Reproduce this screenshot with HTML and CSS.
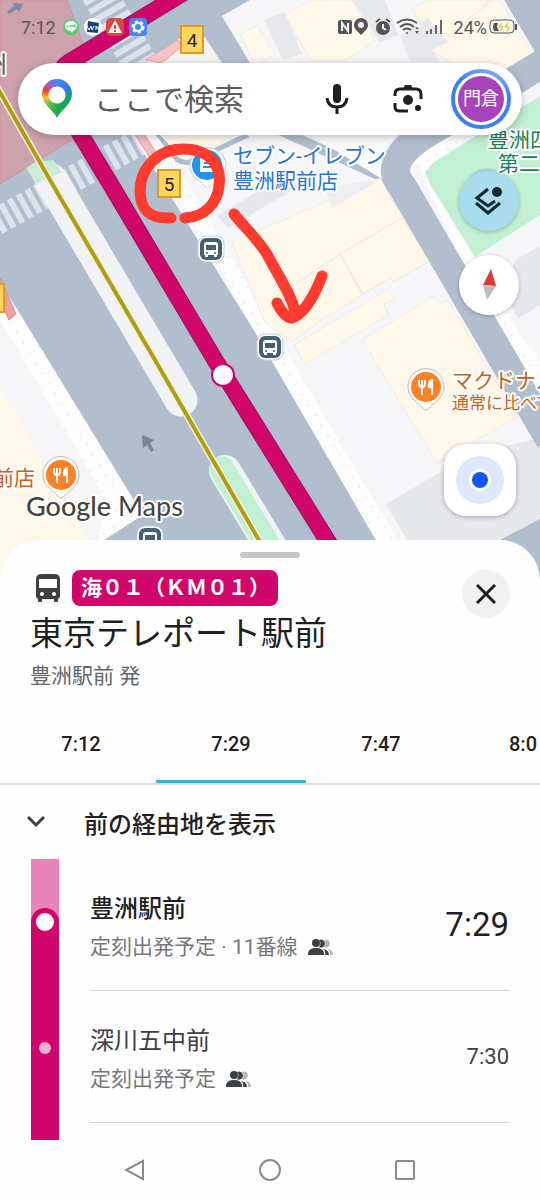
FILE: index.html
```html
<!DOCTYPE html>
<html lang="ja">
<head>
    <meta charset="UTF-8">
    <meta name="viewport" content="width=device-width, initial-scale=1">
    <title>Google Maps</title>
    <link rel="stylesheet" href="styles.css">
</head>
<body>
    <main class="map">
        <svg class="map-canvas" viewBox="0 0 540 580" preserveAspectRatio="xMidYMin slice">
            <defs>
                <pattern id="dots" width="11" height="12" patternUnits="userSpaceOnUse" patternTransform="rotate(-32)">
                    <rect width="11" height="12" fill="#fdfdfe"/>
                    <circle cx="3" cy="3" r="0.8" fill="#dcdfe3"/>
                </pattern>
                <g id="bus-stop">
                    <rect x="-13" y="-13" width="26" height="26" rx="8" fill="#fff" stroke="#c5ccd3" stroke-width="1"/>
                    <rect x="-11" y="-11" width="22" height="22" rx="6" fill="#455f73"/>
                    <path d="M-7,-4 Q-7,-7 -4,-7 H4 Q7,-7 7,-4 V6 H6 V8 H3 V6 H-3 V8 H-6 V6 H-7 Z" fill="#fff"/>
                    <rect x="-5" y="-4" width="10" height="5" fill="#455f73"/>
                    <circle cx="-4" cy="4" r="1" fill="#455f73"/>
                    <circle cx="4" cy="4" r="1" fill="#455f73"/>
                </g>
                <g id="food">
                    <path d="M0,23 C-3,22 -9,15 -13,12 A18,18 0 1 1 13,12 C9,15 3,22 0,23 Z" fill="#fff" stroke="#bdb8b2" stroke-width="1"/>
                    <circle r="15" fill="#ff8126"/>
                    <path d="M-7,-7 V-3 Q-7,0 -4,0 V8 M-4,-7 V0 M-1,-7 V-3 Q-1,0 -4,0" fill="none" stroke="#fff" stroke-width="2"/>
                    <path d="M7,-8 V8 H5 V1 H2 V-3 Q3,-8 7,-8Z" fill="#fff"/>
                </g>
            </defs>

            <rect width="540" height="580" fill="#b0bece"/>

            <!-- station block -->
            <path d="M0,0 H67 L83,44 L86,63 L73,139 L0,184 Z" fill="#cea2ad" stroke="#d58d9c"/>
            <path d="M7,12 L14,6 L13,3 L23,4 L19,12 L17,9 L9,14 Z" fill="#7d8b9c"/>

            <!-- crosswalks -->
            <path d="M98,-8 L144,70" stroke="#dbe3ec" stroke-width="35" stroke-dasharray="6 4"/>
            <path d="M-4,222 L150,136" stroke="#dbe3ec" stroke-width="27" stroke-dasharray="6 4"/>

            <!-- block on the left -->
            <path d="M0,283 L17,309 L143,515 L104,540 L85,580 H0 Z" fill="url(#dots)"/>
            <path d="M0,320 L106,500 L90,580 H0 Z" fill="#f6f6f8"/>
            <path d="M0,386 L25,430 L88,540 V580 H0 Z" fill="#fdf8ea"/>
            <path d="M0,278 L16,314 L9,320 L0,300 Z" fill="#eda2a2" stroke="#e28789"/>
            <path d="M110,545 L146,522" stroke="#b0bece" stroke-width="7"/>

            <!-- blocks on the right -->
            <path d="M222,16 L250,0 H504 L540,60 V580 H399 L376,540 L258,337 L124,121 L150,58 L193,30 L200,28 L222,63 L250,63 Z" fill="#f6f6f8"/>
            <path d="M145,135 L160,135 L208,217 L404,552 L390,565 L376,540 L258,337 Z" fill="url(#dots)"/>
            <path d="M196,34 L222,63 H248 L222,18 L205,-4 L178,14 Z" fill="#b0bece"/>
            <path d="M205,-4 L222,16 L250,0 Z" fill="#b0bece"/>
            <path d="M222,16 L250,0 H504 L536,56 L470,92 L200,95 L255,70 Z" fill="#f6f6f8"/>
            <path d="M240,35 L257,25 L275,55 L255,65 Z M285,15 L312,0 H352 L375,40 L347,60 H310 Z M430,50 L493,0 L500,1 L534,56 L470,90 L450,62 Z M412,8 L430,0 H490 L447,40 L432,45 Z" fill="#fdf8ea" stroke="#f1ecdf"/>
            <path d="M264,20 L284,12 L302,54 L283,60 Z M352,0 H385 L398,35 L380,42 Z M400,35 L428,18 L448,42 L432,50 L440,62 L410,62 Z" fill="#e8e9ed"/>
            <path d="M200,30 L222,63 H150 Z" fill="#f6f4ef"/>
            <path d="M145,60 L178,40 L182,46 L162,63 Z" fill="#f4c4c6" stroke="#e9a5a7"/>
            <path d="M135,135 L145,135 L157,154 L150,158 Z" fill="#f5bcbd" stroke="#e9a5a7"/>
            <path d="M148,120 L170,150 Q178,165 190,162 L248,135" stroke="#b0bece" stroke-width="5" fill="none"/>
            <path d="M160,135 H235 L190,158 Q180,160 174,150 Z" fill="#fdf8ea"/>
            <path d="M275,128 L400,185" stroke="#b0bece" stroke-width="10" fill="none"/>
            <path d="M310,135 H410 L390,160 L392,185 Z" fill="#fafafb"/>
            <path d="M217,216 L270,184 L300,186 L228,228 Z" fill="#e6e8ec"/>
            <path d="M232,242 L380,178 L402,218 L340,254 L362,295 L318,322 L292,341 L265,323 Z" fill="#fdf8ea" stroke="#f1ecdf"/>
            <path d="M340,254 L402,218 L430,261 L394,281 L390,278 L363,294 Z M268,302 L340,254" fill="#fdf8ea" stroke="#efe9dc"/>
            <path d="M325,187 L380,180 L332,208 Z" fill="#eeeef1"/>
            <path d="M294,345 L388,289 L395,299 L384,304 L388,315 L305,364 Z" fill="#fdf8ea" stroke="#f1ecdf"/>
            <path d="M362,340 L433,296 L441,303 L448,300 L516,417 L437,463 Z" fill="#fdf8ea" stroke="#f1ecdf"/>
            <path d="M386,504 L488,444 L494,448 L533,440 L540,447 V580 H430 Z" fill="#e7e8ec"/>
            <path d="M490,580 L500,540 L540,519 V580 Z" fill="#b0bece"/>

            <!-- park and side road -->
            <path d="M405,135 H540 V240 L475,257 L530,345 L540,360 V440 Z" fill="url(#dots)"/>
            <path d="M425,172 L434,162 L540,96 V215 L475,257 L430,184 Z" fill="#c2f0d2"/>
            <path d="M475,257 L540,217 V345 L530,350 Z" fill="#f6f6f8"/>
            <path d="M518,258 L540,246 V305 L518,319 L500,285 Z" fill="#e7e8ec"/>
            <circle cx="487" cy="188" r="20" fill="#aadcea"/>
            <path d="M525,0 L560,60 M552,58 L432,130 Q380,160 402,186 L550,440" fill="none" stroke="#b0bece" stroke-width="29"/>

            <!-- median strips -->
            <path d="M51,180 L181,400" stroke="#f1f3f5" stroke-width="33" stroke-linecap="round"/>
            <path d="M26,168 L35,162 L53,160 L62,172 L36,184 Z" fill="#c9ecd7"/>
            <path d="M225,471 L285,570" stroke="#f1f3f5" stroke-width="32" stroke-linecap="round"/>
            <path d="M222,469 L282,568" stroke="#c2f0d2" stroke-width="25" stroke-linecap="round"/>

            <!-- rail and bus route -->
            <path d="M-3,87 L50,180 L155,360 L278,573" fill="none" stroke="#f3f1dc" stroke-width="7"/>
            <path d="M-3,87 L50,180 L155,360 L278,573" fill="none" stroke="#b09d14" stroke-width="4"/>
            <path d="M188,-10 L68,63 Q52,74 62,104 L108,180 L215,360 L350,577" fill="none" stroke="#a30a5c" stroke-width="17"/>
            <path d="M188,-10 L68,63 Q52,74 62,104 L108,180 L215,360 L350,577" fill="none" stroke="#d1066c" stroke-width="15"/>
            <circle cx="223" cy="375" r="11" fill="#fff" stroke="#d1066c" stroke-width="2"/>
            <path d="M142,435 L154,440 L150,443 L154,450 L151,452 L147,445 L143,448 Z" fill="#76869a"/>

            <!-- exits -->
            <g class="exit">
                <rect x="181" y="26" width="22" height="27"/>
                <text x="192" y="47">4</text>
                <rect x="-18" y="284" width="22" height="28"/>
            </g>

            <!-- places -->
            <path d="M208,188 C205,187 199,180 194,177 A18,18 0 1 1 222,177 C217,180 211,187 208,188 Z" fill="#fff" stroke="#c9ced4"/>
            <circle cx="207" cy="165" r="15" fill="#1a95f2"/>
            <path d="M200,158 H212 L214,162 V172 H200 Z" fill="#fff"/>
            <path d="M203,167 H211 M204,163 H210" stroke="#1a95f2" stroke-width="2"/>
            <g class="exit">
                <rect x="158" y="170" width="22" height="27"/>
                <text x="169" y="191">5</text>
            </g>
            <use href="#bus-stop" x="211" y="249"/>
            <use href="#bus-stop" x="270" y="347"/>
            <use href="#bus-stop" x="150" y="539"/>
            <use href="#food" x="61" y="475"/>
            <use href="#food" x="426" y="387"/>
            <g class="place">
                <text class="shop" x="233" y="163">セブン-イレブン</text>
                <text class="shop" x="233" y="188">豊洲駅前店</text>
                <text class="park" x="488" y="147">豊洲四</text>
                <text class="park" x="498" y="171">第二</text>
                <text class="restaurant" x="452" y="388">マクドナル</text>
                <text class="restaurant small" x="452" y="409">通常に比べて</text>
                <text class="restaurant" x="-7" y="485">前店</text>
                <text class="station" x="-17" y="73">州</text>
                <text class="brand" x="26" y="516"><tspan class="brand-name">Google</tspan> Maps</text>
            </g>

            <!-- hand drawn marks -->
            <path class="ink" d="M171,218 C150,219 141,211 140,192 C140,166 160,149 183,149 C210,149 222,166 219,186 C217,204 204,217 185,218"/>
            <path class="ink" d="M234,214 C245,228 262,244 268,256 C280,279 294,299 295,314 M277,303 C281,311 286,318 292,318 C301,315 312,302 322,276"/>
        </svg>

        <div class="overlay">
            <header class="status-bar">
                <span>7:12</span>
                <svg width="84" height="18" viewBox="0 0 84 18">
                    <circle cx="8" cy="9" r="8" fill="#56cf6c"/>
                    <ellipse cx="8" cy="8" rx="6" ry="5" fill="#fff"/>
                    <path d="M6,11 L9,15 L12,11 Z" fill="#fff"/>
                    <path d="M4,7 V9 H6 M7,7 V9 M8,9 V7 L10,9 V7 M13,7 H11 V9 H13" fill="none" stroke="#56cf6c" stroke-width="1"/>
                    <circle cx="30" cy="9" r="9" fill="#fff"/>
                    <path d="M25,3 L36,5 L35,15 L24,14 Z" fill="#164481"/>
                    <path d="M24,8 L26,12 L28,8 L29,12 L31,8 M33,12 V8 L36,12 V8" fill="none" stroke="#fff" stroke-width="1"/>
                    <rect x="43" width="18" height="18" rx="5" fill="#dd4540"/>
                    <path d="M52,2 L59,15 H45 Z" fill="#fff"/>
                    <path d="M52,7 V11 M52,12 V14" stroke="#dd4540" stroke-width="2"/>
                    <rect x="66" width="18" height="18" rx="4" fill="#4486f4"/>
                    <circle cx="75" cy="9" r="5" fill="none" stroke="#fff" stroke-width="3" stroke-dasharray="3 2"/>
                    <circle cx="75" cy="9" r="4" fill="none" stroke="#fff" stroke-width="2"/>
                </svg>
                <svg class="status-right" width="108" height="20" viewBox="0 0 108 20" fill="#555">
                    <rect x="0" y="3" width="14" height="14" rx="2"/>
                    <path d="M4,14 V6 L10,14 V6" fill="none" stroke="#f6f6f8" stroke-width="2"/>
                    <path d="M23,18 C18,13 16,11 16,8 A7,7 0 0 1 30,8 C30,11 28,13 23,18 Z"/>
                    <circle cx="23" cy="8" r="3" fill="#f6f6f8"/>
                    <circle cx="45" cy="11" r="7"/>
                    <path d="M38,5 L42,2 M52,5 L48,2" stroke="#555" stroke-width="2"/>
                    <path d="M45,7 V11 L48,13" fill="none" stroke="#f6f6f8" stroke-width="2"/>
                    <path d="M59,6 Q69,-1 79,6 M62,10 Q69,4 76,10 M65,13 Q69,10 73,13" fill="none" stroke="#555" stroke-width="2"/>
                    <circle cx="69" cy="16" r="1"/>
                    <path d="M77,12 L79,10 L81,12 Z M77,14 L79,17 L81,14 Z"/>
                    <path d="M89,17 V14 M93,17 V12 M98,17 V8 M103,17 V3" stroke="#666" stroke-width="2"/>
                </svg>
                <span>24%</span>
                <svg width="29" height="16" viewBox="0 0 29 16">
                    <rect x="1" y="1" width="24" height="13" rx="4" fill="#faf7ea" stroke="#555" stroke-width="1"/>
                    <path d="M5,4 H9 L8,8 L10,12 H5 Q3,8 5,4 Z" fill="#555"/>
                    <path d="M13,4 L10,8 H14 L12,12 M19,4 L16,8 H20 L18,12" fill="none" stroke="#c8bb12" stroke-width="1"/>
                    <path d="M27,5 V11" stroke="#555" stroke-width="2"/>
                </svg>
            </header>

            <form class="search">
                <span class="maps-pin"></span>
                <input type="search" placeholder="ここで検索" aria-label="ここで検索">
                <button type="button" aria-label="音声検索">
                    <svg width="24" height="32" viewBox="0 0 24 32">
                        <rect x="8" y="1" width="8" height="19" rx="4" fill="#1f1f1f"/>
                        <path d="M2,15 Q3,24 12,24 Q21,24 22,15 M12,24 V31" fill="none" stroke="#1f1f1f" stroke-width="3"/>
                    </svg>
                </button>
                <button type="button" aria-label="レンズ">
                    <svg width="30" height="30" viewBox="0 0 30 30">
                        <path d="M2,12 V10 Q2,5 7,5 H23 Q28,5 28,10 V15 M2,19 V23 Q2,27 7,27 H15" fill="none" stroke="#1f1f1f" stroke-width="3"/>
                        <path d="M10,5 L12,1 H18 L20,5 Z" fill="#1f1f1f"/>
                        <circle cx="15" cy="16" r="5" fill="#1f1f1f"/>
                        <circle cx="25" cy="24" r="3" fill="#1f1f1f"/>
                    </svg>
                </button>
                <button type="button" class="avatar"><span>門倉</span></button>
            </form>

            <div class="map-buttons">
                <button type="button" class="round layers" aria-label="レイヤ">
                    <svg width="30" height="30" viewBox="0 0 30 30">
                        <path d="M14,3 L3,12 L14,20 L21,15 M2,17 L14,27 L26,17" fill="none" stroke="#10262e" stroke-width="3"/>
                        <circle cx="23" cy="6" r="5" fill="#10262e"/>
                    </svg>
                </button>
                <button type="button" class="round" aria-label="コンパス">
                    <svg width="16" height="32" viewBox="0 0 16 32">
                        <path d="M10,0 L15,17 L2,16 Z" fill="#dc3a30"/>
                        <path d="M6,31 L2,16 L15,17 Z" fill="#bdbdbd"/>
                    </svg>
                </button>
                <button type="button" class="locate" aria-label="現在地">
                    <svg width="48" height="48" viewBox="0 0 48 48">
                        <circle cx="24" cy="24" r="24" fill="#e0e8fd"/>
                        <circle cx="24" cy="24" r="11" fill="#fff"/>
                        <circle cx="24" cy="24" r="8" fill="#1157f5"/>
                    </svg>
                </button>
            </div>
        </div>
    </main>

    <section class="sheet">
        <div class="handle"></div>
        <div class="sheet-header">
            <div>
                <div class="route">
                    <svg width="26" height="30" viewBox="0 0 26 30">
                        <path d="M1,6 Q1,1 7,1 H19 Q25,1 25,6 V24 L23,26 V28 Q23,29 22,29 H20 Q19,29 19,28 V26 H7 V28 Q7,29 6,29 H4 Q3,29 3,28 V26 L1,24 Z" fill="#3c4043"/>
                        <rect x="4" y="6" width="18" height="9" fill="#fff"/>
                        <circle cx="7" cy="21" r="2" fill="#fff"/>
                        <circle cx="19" cy="21" r="2" fill="#fff"/>
                    </svg>
                    <span class="badge">海０１（ＫＭ０１）</span>
                </div>
                <h1>東京テレポート駅前</h1>
                <p class="from">豊洲駅前 発</p>
            </div>
            <button type="button" class="close" aria-label="閉じる">
                <svg width="20" height="20" viewBox="0 0 20 20">
                    <path d="M1,1 L19,19 M19,1 L1,19" stroke="#1f1f1f" stroke-width="3"/>
                </svg>
            </button>
        </div>

        <nav class="tabs">
            <button type="button">7:12</button>
            <button type="button" class="active">7:29</button>
            <button type="button">7:47</button>
            <button type="button">8:0</button>
        </nav>

        <button type="button" class="expand">
            <svg width="18" height="12" viewBox="0 0 18 12">
                <path d="M1,1 L9,9 L17,1" fill="none" stroke="#3c4043" stroke-width="3"/>
            </svg>
            前の経由地を表示
        </button>

        <ul class="stops">
            <li class="stop first">
                <div class="rail"><div class="rail-start"><span class="dot"></span></div></div>
                <div class="stop-body">
                    <div>
                        <h2>豊洲駅前</h2>
                        <p>
                            <span>定刻出発予定 · 11番線</span>
                            <svg width="26" height="16" viewBox="0 0 26 16">
                                <path d="M16,1 A4,4 0 1 1 16,8 Q19,4 16,1 Z M20,10 Q25,11 25,16 H22 Q22,12 20,10 Z" fill="#b4b7ba"/>
                                <path d="M11,1 A4,4 0 1 1 11,8 Q14,4 11,1 Z M15,10 Q21,11 21,16 H17 Q18,12 15,10 Z" fill="#3c4043"/>
                                <circle cx="8" cy="4" r="4" fill="#3c4043"/>
                                <path d="M0,16 V14 Q1,9 8,9 Q15,9 16,14 V16 Z" fill="#3c4043"/>
                            </svg>
                        </p>
                    </div>
                    <time>7:29</time>
                </div>
            </li>
            <li class="stop">
                <div class="rail"><span class="dot"></span></div>
                <div class="stop-body">
                    <div>
                        <h2>深川五中前</h2>
                        <p>
                            <span>定刻出発予定</span>
                            <svg width="26" height="16" viewBox="0 0 26 16">
                                <path d="M16,1 A4,4 0 1 1 16,8 Q19,4 16,1 Z M20,10 Q25,11 25,16 H22 Q22,12 20,10 Z" fill="#b4b7ba"/>
                                <path d="M11,1 A4,4 0 1 1 11,8 Q14,4 11,1 Z M15,10 Q21,11 21,16 H17 Q18,12 15,10 Z" fill="#3c4043"/>
                                <circle cx="8" cy="4" r="4" fill="#3c4043"/>
                                <path d="M0,16 V14 Q1,9 8,9 Q15,9 16,14 V16 Z" fill="#3c4043"/>
                            </svg>
                        </p>
                    </div>
                    <time>7:30</time>
                </div>
            </li>
            <li class="stop tail"><div class="rail"></div></li>
        </ul>
    </section>

    <footer class="system-nav">
        <button type="button" aria-label="戻る">
            <svg width="22" height="22" viewBox="0 0 22 22"><path d="M19,2 V20 L2,11 Z"/></svg>
        </button>
        <button type="button" aria-label="ホーム">
            <svg width="24" height="24" viewBox="0 0 24 24"><circle cx="12" cy="12" r="10"/></svg>
        </button>
        <button type="button" aria-label="履歴">
            <svg width="22" height="22" viewBox="0 0 22 22"><rect x="2" y="2" width="18" height="18" rx="1"/></svg>
        </button>
    </footer>
</body>
</html>
```
FILE: styles.css
```css
* {
    box-sizing: border-box;
}

body {
    margin: 0;
    min-height: 100vh;
    display: flex;
    flex-direction: column;
    font-family: Roboto, "Noto Sans CJK JP", sans-serif;
    background: #fefefe;
    color: #1f1f1f;
    overflow-x: hidden;
}

button {
    display: flex;
    align-items: center;
    justify-content: center;
    padding: 0;
    border: none;
    background: none;
    font-family: inherit;
    color: inherit;
    cursor: pointer;
}

h1, h2, p, ul {
    margin: 0;
    padding: 0;
    font-weight: 400;
}

/* map */
.map {
    position: relative;
    overflow: hidden;
}

.map-canvas {
    position: absolute;
    top: 0;
    left: 0;
    width: 100%;
    height: 100%;
}

.overlay {
    position: relative;
    padding-bottom: 64px;
}

.exit rect {
    fill: #fdd65f;
    stroke: #e0982c;
    stroke-width: 2;
}

.exit text {
    font-size: 19px;
    text-anchor: middle;
    fill: #222;
}

.place text {
    font-size: 21px;
    paint-order: stroke;
    stroke: #fff;
    stroke-width: 4px;
    stroke-linejoin: round;
}

.place .shop {
    fill: #2a73d4;
}

.place .park {
    fill: #1c8057;
}

.place .restaurant {
    fill: #c9621b;
}

.place .small {
    font-size: 17px;
}

.place .station {
    font-size: 24px;
    fill: #555;
}

.place .brand {
    font-family: Lato, sans-serif;
    font-size: 27px;
    fill: #444;
}

.brand-name {
    font-weight: 500;
}

.ink {
    fill: none;
    stroke: #ff3a2f;
    stroke-width: 11;
    stroke-linecap: round;
    stroke-linejoin: round;
}

/* status bar */
.status-bar {
    display: flex;
    align-items: center;
    height: 54px;
    padding: 0 22px 0 21px;
    font-size: 18px;
    color: #555;
}

.status-bar span + svg {
    margin-left: 7px;
}

.status-bar .status-right {
    margin-left: auto;
    margin-right: 8px;
}

.status-right ~ span + svg {
    margin-left: 2px;
}

/* search */
.search {
    display: flex;
    align-items: center;
    gap: 44px;
    height: 72px;
    margin: 9px 18px 0;
    padding: 0 11px 0 24px;
    border-radius: 36px;
    background: #fff;
    box-shadow: 0 2px 8px rgba(0, 0, 0, 0.25);
}

.maps-pin {
    flex: none;
    width: 30px;
    height: 40px;
    margin-right: -22px;
    background: radial-gradient(circle at 15px 16px, #fff 8px, transparent 9px),
        conic-gradient(from 0deg at 15px 16px, #4285f4, #3478e8 60deg, #10a765 100deg, #1fa84c 180deg, #6cc04a 220deg, #f6c629 255deg, #ea4335 290deg, #9a63c8 325deg, #4285f4);
    clip-path: path("M15,39 C12,32 0,25 0,15 A15,15 0 0 1 30,15 C30,25 18,32 15,39 Z");
}

.search input {
    flex: 1;
    min-width: 0;
    padding: 0;
    border: none;
    outline: none;
    background: none;
    font-family: inherit;
    font-size: 30px;
}

.search input::placeholder {
    color: #5e5e5e;
}

.search .avatar {
    width: 60px;
    height: 60px;
    margin-left: -16px;
    border-radius: 50%;
    background: linear-gradient(200deg, #9db8fb, #3b7ff5 35%);
}

.avatar span {
    width: 52px;
    height: 52px;
    border: 3px solid #fff;
    border-radius: 50%;
    background: #a844bb;
    color: #fff;
    font-size: 18px;
    line-height: 46px;
}

/* floating buttons */
.map-buttons {
    display: flex;
    flex-direction: column;
    align-items: flex-end;
    gap: 24px;
    padding: 36px 21px 0;
}

.round {
    width: 60px;
    height: 60px;
    border-radius: 50%;
    background: #fff;
    box-shadow: 0 1px 4px rgba(0, 0, 0, 0.25);
}

.layers {
    background: #a9dcec;
}

.locate {
    width: 72px;
    height: 72px;
    margin-top: 105px;
    margin-right: 3px;
    border-radius: 22px;
    background: #fff;
    box-shadow: 0 1px 5px rgba(0, 0, 0, 0.3);
}

/* bottom sheet */
.sheet {
    position: relative;
    flex: 1;
    display: flex;
    flex-direction: column;
    margin-top: -40px;
    padding-top: 12px;
    border-radius: 40px 40px 0 0;
    background: #fefefe;
}

.handle {
    width: 60px;
    height: 6px;
    margin: 0 auto;
    border-radius: 3px;
    background: #c7c7c7;
}

.sheet-header {
    display: flex;
    justify-content: space-between;
    align-items: flex-start;
    padding: 12px 30px 0;
}

.route {
    display: flex;
    align-items: center;
    gap: 11px;
    padding-left: 5px;
}

.badge {
    padding: 0 8px 0 9px;
    border-radius: 8px;
    background: #d1066c;
    color: #fff;
    font-size: 21px;
    font-weight: 700;
    line-height: 36px;
}

h1 {
    padding-top: 3px;
    font-size: 33px;
    line-height: 50px;
}

.from {
    font-size: 21px;
    line-height: 34px;
    color: #666;
}

.close {
    width: 48px;
    height: 48px;
    border-radius: 50%;
    background: #f1f1f1;
}

.tabs {
    display: flex;
    height: 92px;
    padding-left: 6px;
    border-bottom: 2px solid #dadce0;
    overflow: hidden;
}

.tabs button {
    flex: 0 0 150px;
    padding-top: 14px;
    border-bottom: 3px solid transparent;
    font-size: 20px;
    font-weight: 500;
}

/* the last tab runs off the edge of the screen */
.tabs button:last-child {
    justify-content: flex-start;
    padding-left: 53px;
}

.tabs .active {
    border-bottom-color: #46acd0;
}

.expand {
    justify-content: flex-start;
    gap: 39px;
    height: 74px;
    padding-left: 27px;
    font-size: 24px;
    font-weight: 500;
}

/* stops */
.stops {
    flex: 1;
    display: flex;
    flex-direction: column;
    list-style: none;
}

.stop {
    display: flex;
    gap: 31px;
    padding: 0 31px;
}

.rail {
    flex: none;
    display: flex;
    justify-content: center;
    align-items: flex-start;
    width: 28px;
    padding-top: 51px;
    background: #d1066c;
}

.dot {
    width: 12px;
    height: 12px;
    border-radius: 50%;
    background: #efb0d1;
}

.first .rail {
    align-items: stretch;
    padding-top: 49px;
    background: #e884b8;
}

.rail-start {
    width: 28px;
    padding: 5px;
    border-radius: 14px 14px 0 0;
    background: #d1066c;
}

.first .dot {
    display: block;
    width: 18px;
    height: 18px;
    background: #fff;
}

.stop-body {
    flex: 1;
    display: flex;
    justify-content: space-between;
    align-items: center;
    padding: 31px 0 24px;
    border-bottom: 1px solid #d5d5d5;
    line-height: 38px;
}

.stop h2 {
    font-size: 24px;
    color: #3c4043;
}

.stop p {
    display: flex;
    align-items: center;
    gap: 10px;
    font-size: 21px;
    color: #777;
}

.stop time {
    padding-bottom: 6px;
    font-size: 22px;
    color: #444;
}

.first h2,
.first time {
    color: #1f1f1f;
}

.first h2 {
    font-weight: 500;
}

.first time {
    font-size: 33px;
}

.tail {
    flex: 1;
}

.tail .rail {
    padding: 0;
}

/* system navigation */
.system-nav {
    display: grid;
    grid-template-columns: repeat(3, 1fr);
    height: 60px;
    padding: 0 68px;
}

.system-nav svg {
    fill: none;
    stroke: #8a8a8a;
    stroke-width: 2;
}
```
